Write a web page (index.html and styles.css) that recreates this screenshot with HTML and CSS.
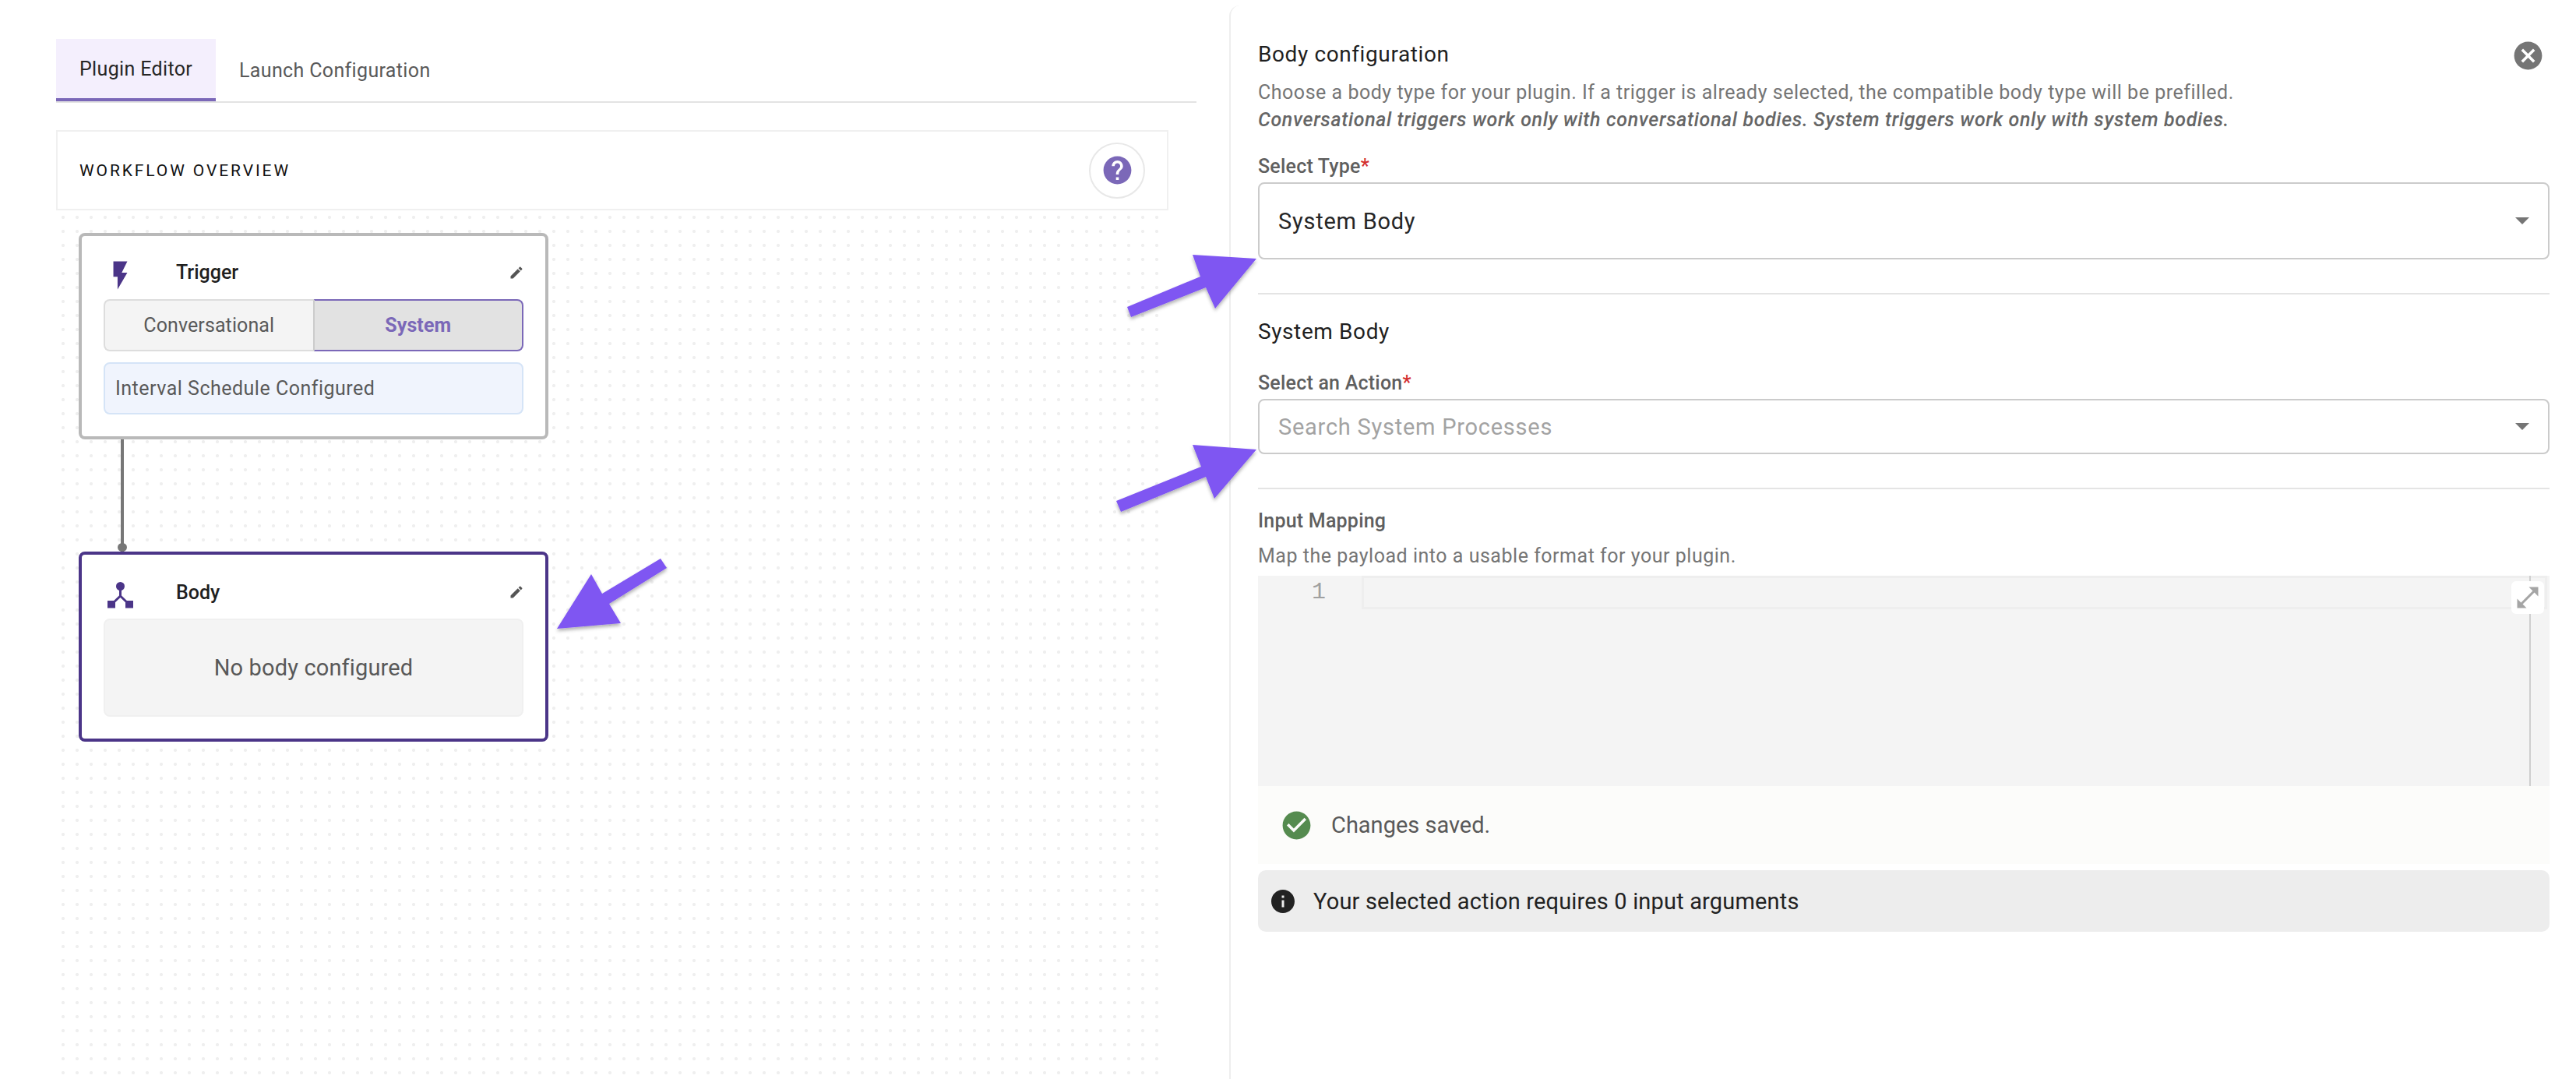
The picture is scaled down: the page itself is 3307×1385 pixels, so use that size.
FILE: index.html
```html
<!DOCTYPE html>
<html lang="en">
<head>
<meta charset="utf-8">
<title>Plugin Editor</title>
<link rel="stylesheet" href="styles.css">
</head>
<body>
<div class="page">
  <main class="left">
    <nav class="tabs">
      <a class="tab tab-active">Plugin Editor</a>
      <a class="tab">Launch Configuration</a>
    </nav>
    <header class="overview">
      <span class="overview-title">WORKFLOW OVERVIEW</span>
      <span class="help">
        <svg class="ic43" viewBox="0 0 24 24"><path fill="#7b68b8" d="M12 2C6.48 2 2 6.48 2 12s4.48 10 10 10 10-4.48 10-10S17.52 2 12 2zm1 17h-2v-2h2v2zm2.07-7.75l-.9.92C13.45 12.9 13 13.5 13 15h-2v-.5c0-1.1.45-2.1 1.17-2.83l1.24-1.26c.37-.36.59-.86.59-1.41 0-1.1-.9-2-2-2s-2 .9-2 2H8c0-2.21 1.79-4 4-4s4 1.79 4 4c0 .88-.36 1.68-.93 2.25z"/></svg>
      </span>
    </header>
    <section class="canvas">
      <article class="node node-trigger">
        <div class="node-head">
          <svg class="node-icon" viewBox="0 0 24 24"><path fill="#4b3588" d="M7 2v11h3v9l7-12h-4l4-8z"/></svg>
          <span class="node-title">Trigger</span>
          <svg class="pencil" viewBox="0 0 24 24"><path fill="#555" d="M3 17.25V21h3.75L17.81 9.94l-3.75-3.75L3 17.25zM20.71 7.04c.39-.39.39-1.02 0-1.41l-2.34-2.34c-.39-.39-1.02-.39-1.41 0l-1.83 1.83 3.75 3.75 1.83-1.83z"/></svg>
        </div>
        <div class="toggle">
          <span class="toggle-opt">Conversational</span>
          <span class="toggle-opt toggle-on">System</span>
        </div>
        <div class="schedule">Interval Schedule Configured</div>
      </article>
      <div class="connector"><span class="connector-dot"></span></div>
      <article class="node node-body">
        <div class="node-head">
          <svg class="node-icon" viewBox="0 0 43 43"><g fill="#4b3588"><circle cx="21.5" cy="10.5" r="5.5"/><rect x="5" y="29" width="10" height="9.5"/><rect x="28" y="29" width="10" height="9.5"/></g><path fill="none" stroke="#4b3588" stroke-width="3" d="M21.5 11v13M21.5 23L10 34M21.5 23L33 34"/></svg>
          <span class="node-title">Body</span>
          <svg class="pencil" viewBox="0 0 24 24"><path fill="#555" d="M3 17.25V21h3.75L17.81 9.94l-3.75-3.75L3 17.25zM20.71 7.04c.39-.39.39-1.02 0-1.41l-2.34-2.34c-.39-.39-1.02-.39-1.41 0l-1.83 1.83 3.75 3.75 1.83-1.83z"/></svg>
        </div>
        <div class="empty">No body configured</div>
      </article>
    </section>
  </main>

  <aside class="panel">
    <div class="panel-head">
      <h2 class="panel-title">Body configuration</h2>
      <svg class="ic43" viewBox="0 0 24 24"><path fill="#757575" d="M12 2C6.47 2 2 6.47 2 12s4.47 10 10 10 10-4.47 10-10S17.53 2 12 2zm5 13.59L15.59 17 12 13.41 8.41 17 7 15.59 10.59 12 7 8.41 8.41 7 12 10.59 15.59 7 17 8.41 13.41 12 17 15.59z"/></svg>
    </div>
    <p class="desc desc-first">Choose a body type for your plugin. If a trigger is already selected, the compatible body type will be prefilled.</p>
    <p class="desc desc-strong">Conversational triggers work only with conversational bodies. System triggers work only with system bodies.</p>

    <label class="label label-type">Select Type<span class="req">*</span></label>
    <div class="select select-tall">
      <span class="select-value">System Body</span>
      <span class="caret"></span>
    </div>
    <hr class="rule">
    <h3 class="section-title">System Body</h3>
    <label class="label label-action">Select an Action<span class="req">*</span></label>
    <div class="select select-short">
      <span class="select-value select-placeholder">Search System Processes</span>
      <span class="caret"></span>
    </div>
    <hr class="rule">
    <div class="label label-map">Input Mapping</div>
    <p class="desc desc-map">Map the payload into a usable format for your plugin.</p>

    <div class="editor">
      <div class="gutter"><span class="line-no">1</span></div>
      <div class="active-line"></div>
      <div class="scroll-track"></div>
      <button class="expand" type="button">
        <svg class="ic36" viewBox="0 0 24 24"><path fill="#a5a5a5" d="M21 11V3h-8l3.29 3.29-10 10L3 13v8h8l-3.29-3.29 10-10z"/></svg>
      </button>
    </div>
    <div class="saved">
      <svg class="ic43" viewBox="0 0 24 24"><path fill="#558b4f" d="M12 2C6.48 2 2 6.48 2 12s4.48 10 10 10 10-4.48 10-10S17.52 2 12 2zm-2 15l-5-5 1.41-1.41L10 14.17l7.59-7.59L19 8l-9 9z"/></svg>
      <span class="saved-text">Changes saved.</span>
    </div>
    <div class="notice">
      <svg class="ic36" viewBox="0 0 24 24"><path fill="#222" d="M12 2C6.48 2 2 6.48 2 12s4.48 10 10 10 10-4.48 10-10S17.52 2 12 2zm1 15h-2v-6h2v6zm0-8h-2V7h2v2z"/></svg>
      <span class="notice-text">Your selected action requires 0 input arguments</span>
    </div>
  </aside>

  <svg class="arrows" viewBox="0 0 3307 1385" width="3307" height="1385">
    <defs>
      <filter id="arrow-shadow" x="-20%" y="-20%" width="140%" height="140%">
        <feDropShadow dx="0" dy="3" stdDeviation="2" flood-color="#000" flood-opacity=".3"/>
      </filter>
    </defs>
    <g fill="#7f56f2" filter="url(#arrow-shadow)">
      <polygon points="715,807 759,737 773,762 848,717 856,729 782,775 797,800"/>
      <polygon points="1613,332 1531,327 1541,355 1447,394 1452,407 1548,369 1560,396"/>
      <polygon points="1613,577 1531,571 1542,599 1433,643 1439,657 1548,612 1559,640"/>
    </g>
  </svg>
</div>
</body>
</html>
```
FILE: styles.css
```css
* { box-sizing: border-box; }
html, body { margin: 0; padding: 0; background: #fff; }
body { font-family: Roboto, "Liberation Sans", sans-serif; color: #1f1f1f; }
.page { position: relative; display: flex; width: 3307px; height: 1385px; overflow: hidden; }

.left { width: 1578px; flex: none; display: flex; flex-direction: column; padding: 50px 42px 0 72px; }
.tabs { display: flex; height: 82px; border-bottom: 2px solid #e3e3e3; }
.tab { height: 80px; display: flex; align-items: center; padding: 0 30px; font-size: 25px; color: #595959; letter-spacing: .35px; white-space: nowrap; }
.tab-active { width: 205px; background: #f4effd; border-bottom: 4px solid #7b68b8; color: #262626; }

.overview { width: 1428px; height: 103px; margin-top: 35px; border: 2px solid #f0f0f0; display: flex; align-items: center; justify-content: space-between; padding: 0 28px; }
.overview-title { font-size: 21px; letter-spacing: 2.9px; color: #111; }
.help { width: 72px; height: 72px; border: 2px solid #e8e8e8; border-radius: 50%; display: flex; align-items: center; justify-content: center; }
.ic43 { width: 43px; height: 43px; flex: none; display: block; }
.ic36 { width: 36px; height: 36px; flex: none; display: block; }

.canvas { flex: 1; width: 1422px; padding: 29px 0 0 29px; background-image: radial-gradient(circle at center, #efefef 1.8px, transparent 2.4px); background-size: 18px 18px; }
.node { width: 603px; background: #fff; border-radius: 8px; padding: 0 28px; }
.node-trigger { height: 265px; border: 4px solid #b9b9b9; }
.node-body { height: 244px; border: 4px solid #4b3588; }
.node-head { display: flex; align-items: center; height: 81px; padding-top: 12px; }
.node-body .node-head { height: 82px; padding-top: 14px; }
.node-icon { width: 43px; height: 43px; flex: none; margin-top: 7px; }
.node-title { margin-left: 50px; flex: 1; font-size: 25px; font-weight: 500; color: #1f1f1f; }
.pencil { width: 20px; height: 20px; flex: none; margin-right: -1px; }

.toggle { display: flex; height: 67px; }
.toggle-opt { flex: 1; display: flex; align-items: center; justify-content: center; font-size: 25px; letter-spacing: .1px; color: #595959; background: #f4f4f4; border: 2px solid #ddd; border-right: 1px solid #ccc; border-radius: 8px 0 0 8px; }
.toggle-on { color: #7b68b8; font-weight: 700; background: #e2e2e2; border: 2px solid #7b68b8; border-left: 1px solid #ccc; border-radius: 0 8px 8px 0; }
.schedule { height: 67px; margin-top: 14px; display: flex; align-items: center; padding: 0 13px; font-size: 25px; letter-spacing: .5px; color: #595959; background: #f0f4fd; border: 2px solid #d5e4f7; border-radius: 8px; }

.connector { position: relative; width: 4px; height: 144px; margin-left: 54px; background: #777; }
.connector-dot { position: absolute; left: -4px; bottom: 0; width: 12px; height: 11px; border-radius: 50%; background: #777; }

.empty { height: 126px; display: flex; align-items: center; justify-content: center; font-size: 29px; letter-spacing: .15px; color: #595959; background: #f4f4f4; border: 2px solid #f0f0f0; border-radius: 8px; }

.panel { flex: 1; margin-top: 7px; padding: 0 34px 0 35px; border-left: 2px solid #eee; border-top-left-radius: 14px; display: flex; flex-direction: column; }
.panel-head { display: flex; justify-content: space-between; align-items: flex-start; height: 77px; padding-top: 48px; }
.panel-head .ic43 { margin: -5px 6px 0 0; }
.panel-title { margin: 0; font-size: 28px; line-height: 30px; font-weight: 400; letter-spacing: .6px; color: #1f1f1f; }
.desc { margin: 0; font-size: 25px; line-height: 35px; letter-spacing: .52px; color: #757575; }
.desc-first { margin-top: 17px; }
.desc-strong { font-style: italic; font-weight: 500; letter-spacing: .64px; color: #666; }
.label { display: block; font-size: 25px; line-height: 30px; font-weight: 500; letter-spacing: .22px; color: #5f5f5f; }
.label-type { margin-top: 28px; }
.label-action { margin-top: 36px; }
.label-map { margin-top: 26px; }
.req { color: #d32f2f; }
.desc-map { margin-top: 12px; height: 43px; }

.select { display: flex; align-items: center; justify-content: space-between; margin-top: 5px; border: 2px solid #cbcbcb; border-radius: 8px; padding: 0 24px; }
.select-tall { height: 99px; }
.select-short { height: 71px; }
.select-value { font-size: 29px; letter-spacing: .75px; color: #262626; }
.select-placeholder { color: #a3a3a3; }
.caret { width: 0; height: 0; border: 9px solid transparent; border-top: 9px solid #757575; border-bottom: 0; }
.rule { width: 100%; height: 2px; margin: 43px 0 0; border: 0; background: #e4e4e4; flex: none; }
.section-title { margin: 33px 0 0; font-size: 28px; line-height: 30px; font-weight: 400; letter-spacing: .6px; color: #1f1f1f; }

.editor { position: relative; flex: none; height: 270px; display: flex; background: #f4f4f4; }
.gutter { width: 133px; flex: none; display: flex; justify-content: flex-end; padding: 0 46px 0 0; }
.line-no { font-family: "Liberation Mono", monospace; font-size: 30px; line-height: 42px; color: #a0a0a0; }
.active-line { flex: 1; height: 43px; margin-right: 3px; border: 3px solid #eeeeee; }
.scroll-track { position: absolute; top: 0; bottom: 0; right: 24px; width: 2px; background: #cfcfcf; }
.expand { position: absolute; top: 7px; right: 7px; width: 42px; height: 42px; padding: 0; border: 0; background: #fff; border-radius: 6px; display: flex; align-items: center; justify-content: center; }

.saved { height: 100px; flex: none; display: flex; align-items: center; gap: 23px; padding-left: 28px; background: #fcfcfa; }
.saved-text { font-size: 29px; color: #595959; }
.notice { height: 79px; flex: none; margin-top: 8px; display: flex; align-items: center; gap: 21px; padding-left: 14px; background: #ededed; border-radius: 10px; }
.notice-text { font-size: 29px; letter-spacing: .17px; color: #222; }

.arrows { position: absolute; left: 0; top: 0; pointer-events: none; }
```
